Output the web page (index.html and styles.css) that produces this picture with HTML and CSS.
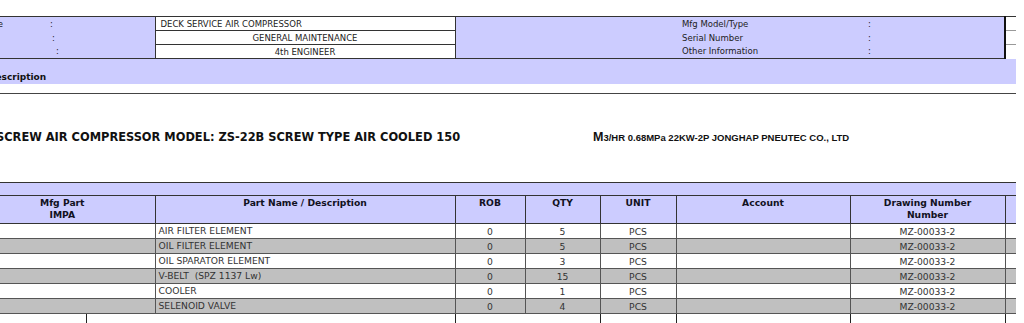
FILE: index.html
```html
<!DOCTYPE html>
<html>
<head>
<meta charset="utf-8">
<title>Spare Parts</title>
<link rel="stylesheet" href="styles.css">
</head>
<body>
<div class="page">
  <table class="info">
    <colgroup>
      <col class="w-lbl"><col class="w-val"><col class="w-gap"><col class="w-mlbl"><col class="w-mcol"><col class="w-ext">
    </colgroup>
    <tr>
      <td class="lav lbl"><span class="ltext l1">Name</span><span class="colon">:</span></td>
      <td class="val left">DECK SERVICE AIR COMPRESSOR</td>
      <td class="lav"></td>
      <td class="lav">Mfg Model/Type</td>
      <td class="lav edge">:</td>
      <td class="ext"></td>
    </tr>
    <tr>
      <td class="lav lbl"><span class="ltext l2"></span><span class="colon">:</span></td>
      <td class="val center">GENERAL MAINTENANCE</td>
      <td class="lav"></td>
      <td class="lav">Serial Number</td>
      <td class="lav edge">:</td>
      <td class="ext"></td>
    </tr>
    <tr>
      <td class="lav lbl"><span class="ltext l3"></span><span class="colon">:</span></td>
      <td class="val center">4th ENGINEER</td>
      <td class="lav"></td>
      <td class="lav">Other Information</td>
      <td class="lav edge">:</td>
      <td class="ext last"></td>
    </tr>
  </table>

  <div class="desc">Description</div>
  <div class="rule"></div>

  <div class="title-row">
    <div class="t1">SCREW AIR COMPRESSOR MODEL: ZS-22B SCREW TYPE AIR COOLED 150</div>
    <div class="t2"><span class="big">M</span>3/HR 0.68MPa 22KW-2P JONGHAP PNEUTEC CO., LTD</div>
  </div>

  <table class="items">
    <colgroup>
      <col class="c-mfg"><col class="c-name"><col class="c-rob"><col class="c-qty"><col class="c-unit"><col class="c-acct"><col class="c-draw"><col class="c-ext">
    </colgroup>
    <tr class="band"><td colspan="8"></td></tr>
    <tr class="head">
      <th>Mfg Part<br>IMPA</th>
      <th>Part Name / Description</th>
      <th>ROB</th>
      <th>QTY</th>
      <th>UNIT</th>
      <th>Account</th>
      <th>Drawing Number<br>Number</th>
      <th></th>
    </tr>
    <tr class="row">
      <td></td><td class="name">AIR FILTER ELEMENT</td><td class="num">0</td><td class="num">5</td><td class="num">PCS</td><td></td><td class="num">MZ-00033-2</td><td></td>
    </tr>
    <tr class="row alt">
      <td></td><td class="name">OIL FILTER ELEMENT</td><td class="num">0</td><td class="num">5</td><td class="num">PCS</td><td></td><td class="num">MZ-00033-2</td><td></td>
    </tr>
    <tr class="row">
      <td></td><td class="name">OIL SPARATOR ELEMENT</td><td class="num">0</td><td class="num">3</td><td class="num">PCS</td><td></td><td class="num">MZ-00033-2</td><td></td>
    </tr>
    <tr class="row alt">
      <td></td><td class="name">V-BELT&nbsp; (SPZ 1137 Lw)</td><td class="num">0</td><td class="num">15</td><td class="num">PCS</td><td></td><td class="num">MZ-00033-2</td><td></td>
    </tr>
    <tr class="row">
      <td></td><td class="name">COOLER</td><td class="num">0</td><td class="num">1</td><td class="num">PCS</td><td></td><td class="num">MZ-00033-2</td><td></td>
    </tr>
    <tr class="row alt">
      <td></td><td class="name">SELENOID VALVE</td><td class="num">0</td><td class="num">4</td><td class="num">PCS</td><td></td><td class="num">MZ-00033-2</td><td></td>
    </tr>
  </table>

  <table class="tail">
    <colgroup>
      <col class="d1"><col class="d2"><col class="d3"><col class="d4"><col class="d5"><col class="d6"><col class="d7">
    </colgroup>
    <tr><td></td><td></td><td></td><td></td><td></td><td></td><td></td></tr>
  </table>
</div>
</body>
</html>
```

FILE: styles.css
```css
html, body {
  margin: 0;
  padding: 0;
  background: #ffffff;
  overflow: hidden;
}

body {
  font-family: "DejaVu Sans", Verdana, sans-serif;
  font-size: 8.5px;
  color: #222222;
}

.page {
  margin-left: -30px;
  width: 1046px;
}

/* ---------- top info table ---------- */
.info {
  margin-top: 16px;
  width: 1046px;
  table-layout: fixed;
  border-collapse: collapse;
}

.info td {
  height: 13px;
  padding: 0;
  line-height: 12px;
  white-space: nowrap;
  overflow: hidden;
}

.info tr:first-child td {
  border-top: 1px solid #333333;
}

.info tr:last-child td {
  border-bottom: 1px solid #333333;
}

.w-lbl { width: 185px; }
.w-val { width: 300px; }
.w-gap { width: 227px; }
.w-mlbl { width: 186px; }
.w-mcol { width: 137px; }
.w-ext { width: 11px; }

.lav { background: #ccccff; }

.lbl { padding-left: 8px !important; }

.ltext { display: inline-block; }
.l1 { width: 72px; }
.l2 { width: 74px; }
.l3 { width: 78px; }

.val {
  background: #ffffff;
  border: 1px solid #333333;
}

.val.left { padding-left: 5px !important; }
.val.center { text-align: center; }

.edge { border-right: 2px solid #111111; }

.ext {
  background: #ffffff;
  border-bottom: 1px solid #999999;
}

.info tr:last-child td.ext { border-bottom: 0; }

/* ---------- description band ---------- */
.desc {
  height: 25px;
  box-sizing: border-box;
  padding: 13px 0 0 18px;
  background: #ccccff;
  font-weight: bold;
  font-size: 9px;
  line-height: 11px;
  color: #111111;
}

.rule {
  margin-top: 9px;
  border-top: 1px solid #444444;
}

/* ---------- title ---------- */
.title-row {
  display: flex;
  align-items: baseline;
  margin-top: 35px;
  height: 17px;
  color: #111111;
}

.t1 {
  flex: 0 0 623px;
  box-sizing: border-box;
  padding-left: 26px;
  font-family: "DejaVu Sans Condensed", "DejaVu Sans", sans-serif;
  font-weight: bold;
  font-size: 12.7px;
  white-space: nowrap;
}

.t2 {
  font-family: "Liberation Sans", Arial, sans-serif;
  font-weight: bold;
  font-size: 9.5px;
  white-space: nowrap;
}

.t2 .big { font-size: 12.5px; }

/* ---------- items table ---------- */
.items {
  margin-top: 36px;
  width: 1046px;
  table-layout: fixed;
  border-collapse: collapse;
}

.c-mfg { width: 185px; }
.c-name { width: 300px; }
.c-rob { width: 70px; }
.c-qty { width: 75px; }
.c-unit { width: 76px; }
.c-acct { width: 174px; }
.c-draw { width: 155px; }
.c-ext { width: 11px; }

.band td {
  height: 12px;
  padding: 0;
  background: #ccccff;
  border-top: 1px solid #333333;
  border-bottom: 1px solid #333333;
}

.head th {
  height: 26px;
  padding: 1px 0 0;
  vertical-align: top;
  background: #ccccff;
  border: 1px solid #333333;
  font-family: "DejaVu Sans", Verdana, sans-serif;
  font-weight: bold;
  font-size: 9.2px;
  line-height: 12px;
  color: #111122;
  text-align: center;
  white-space: nowrap;
}

.head th:first-child { border-left: 0; }
.head th:last-child { border-right: 0; }

.row td {
  height: 14px;
  padding: 0;
  font-size: 9.2px;
  line-height: 13px;
  background: #ffffff;
  border: 1px solid #555555;
  white-space: nowrap;
  overflow: hidden;
  color: #333333;
}

.row td:first-child { border-left: 0; }
.row td:last-child { border-right: 0; }

.row.alt td { background: #c0c0c0; }

.row td.name { padding-left: 3px; vertical-align: top; }
.row td.num { text-align: center; vertical-align: bottom; }

/* ---------- following table ---------- */
.tail {
  width: 1046px;
  table-layout: fixed;
  border-collapse: collapse;
}

.d1 { width: 116px; }
.d2 { width: 369px; }
.d3 { width: 145px; }
.d4 { width: 76px; }
.d5 { width: 174px; }
.d6 { width: 155px; }
.d7 { width: 11px; }

.tail td {
  height: 20px;
  padding: 0;
  border-left: 1px solid #222222;
}

.tail td:first-child { border-left: 0; }
```
